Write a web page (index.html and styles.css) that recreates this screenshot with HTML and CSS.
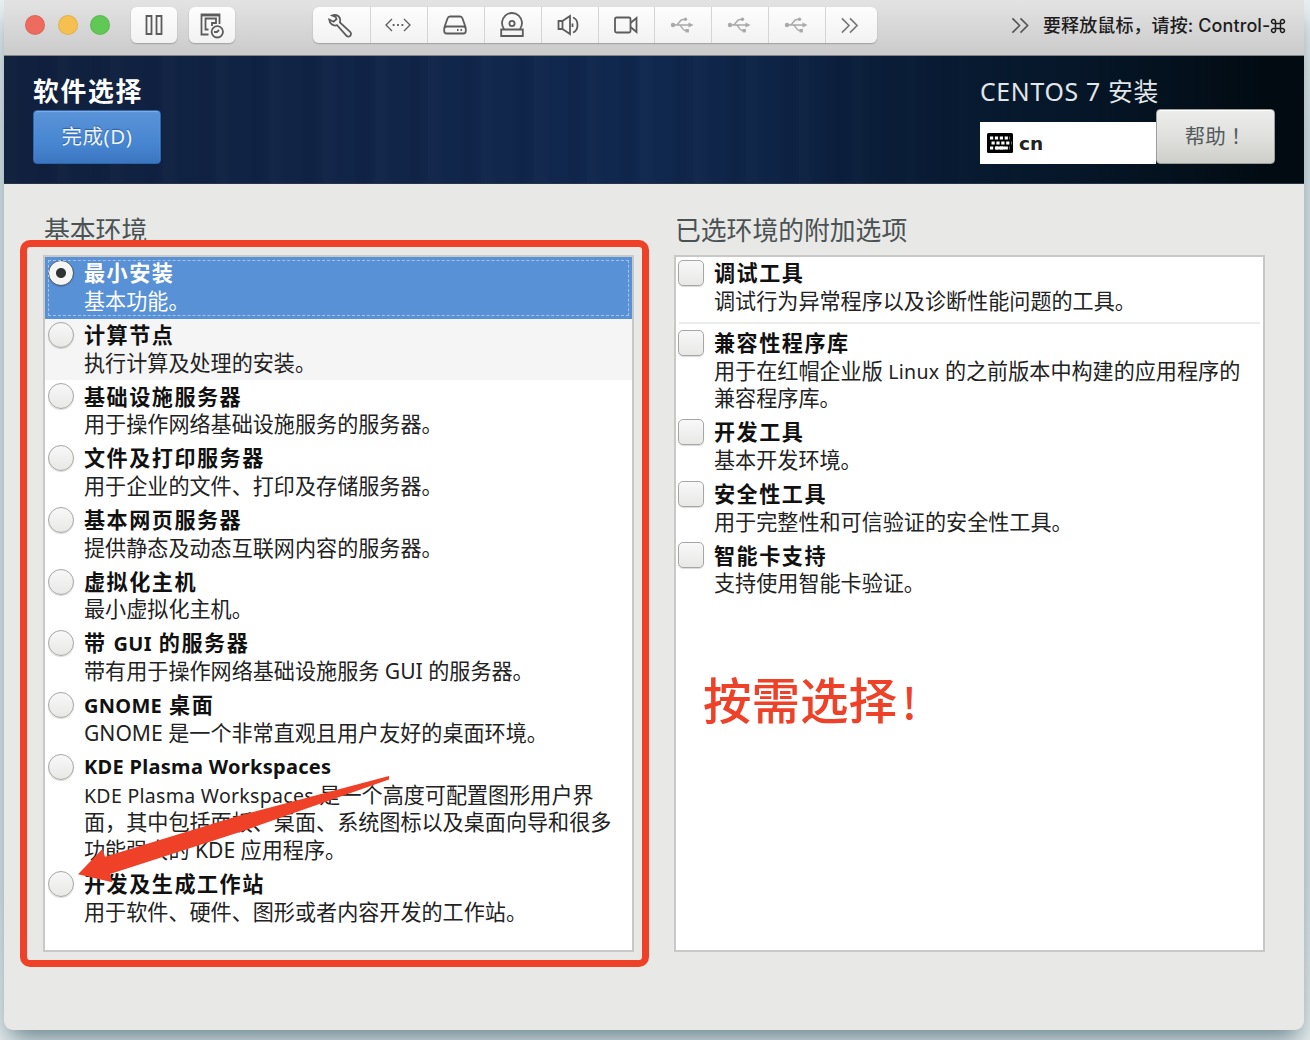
FILE: index.html
```
<!DOCTYPE html>
<html lang="zh-CN">
<head>
    <meta charset="UTF-8">
    <meta name="viewport" content="width=device-width, initial-scale=1.0">
    <title>软件选择</title>
    <link rel="stylesheet" href="styles.css">
</head>
<body>
<svg width="0" height="0" class="defs">
    <symbol id="usb" viewBox="0 0 24 20">
        <path d="M2 10h18M6 10c3 0 3-5.500 7-5.500h2M9 10c3 0 3 5.500 6 5.500h2" fill="none" stroke="currentColor" stroke-width="1.500"/>
        <circle cx="3" cy="10" r="2.200" fill="currentColor"/>
        <circle cx="15.500" cy="4.300" r="1.700" fill="currentColor"/>
        <rect x="15.500" y="14" width="3.400" height="3.400" fill="currentColor"/>
        <path d="M18.500 7.500l5 2.500-5 2.500z" fill="currentColor"/>
    </symbol>
    <symbol id="chevrons" viewBox="0 0 20 20">
        <path d="M2 2.500l7.500 7.500-7.500 7.500M10.500 2.500l7.500 7.500-7.500 7.500" fill="none" stroke="currentColor" stroke-width="1.700"/>
    </symbol>
</svg>

<div class="window">
    <div class="titlebar">
        <div class="lights">
            <span class="light red"></span>
            <span class="light yellow"></span>
            <span class="light green"></span>
        </div>
        <div class="tool-button pause">
            <svg width="20" height="22" viewBox="0 0 20 22"><path d="M2.500 2h5v18h-5zM12.500 2h5v18h-5z"/></svg>
        </div>
        <div class="tool-button">
            <svg width="26" height="28" viewBox="0 0 26 28">
                <path d="M9.500 23.500H2.500V3.500h18v9.500M9.500 18.500H6.500V7.500h10.500v4.500H13v3"/>
                <path d="M3 4.500h17"/>
                <circle cx="18.300" cy="20.800" r="5.700"/>
                <path d="M15 21h3l2-2"/>
            </svg>
        </div>
        <div class="tool-group">
            <div class="tool"><svg width="28" height="28" viewBox="0 0 28 28"><path d="M6 4.500c3-1.500 6.500-.2 7.800 2.500.7 1.600.6 3 .1 4.500l10 9.200c1.400 1.300 1.400 3 .3 4.100-1.200 1.200-3 1-4.100-.4l-9-10.200c-3.600 1.200-7.500-1-7.900-5.700l4.300 2.200 3-2.500-.8-2.200z"/></svg></div>
            <div class="tool"><svg width="28" height="20" viewBox="0 0 28 20"><path d="M8 4l-6 6 6 6M20 4l6 6-6 6" stroke-width="1.300"/><path d="M8.700 10h1.800M13.100 10h1.800M17.500 10h1.800"/></svg></div>
            <div class="tool"><svg width="26" height="22" viewBox="0 0 26 22"><path d="M2.500 13L5.500 4.500C6 3 6.800 2.500 8 2.500h10c1.300 0 2 .5 2.500 2l3 8.500"/><rect x="2.200" y="12.500" width="21.600" height="7" rx="2.500"/><path d="M15 16h1.500M18.500 16h1.500"/></svg></div>
            <div class="tool"><svg width="26" height="26" viewBox="0 0 26 26"><path d="M5 17a10 10 0 1 1 16 0"/><circle cx="13" cy="11.500" r="2.600"/><path d="M2.200 17.500h21.600v6.500H2.200z"/></svg></div>
            <div class="tool"><svg width="26" height="22" viewBox="0 0 26 22"><path d="M2.500 7h4v8h-4zM6.500 7L14 2v18L6.500 15z"/><path d="M17 3.500c6 2 6 13 0 15M16.500 9.500v3.500"/></svg></div>
            <div class="tool"><svg width="26" height="20" viewBox="0 0 26 20"><rect x="2" y="2.500" width="15.500" height="15" rx="1.500"/><path d="M17.500 8l6-5v14l-6-5"/></svg></div>
            <div class="tool dim"><svg width="24" height="20"><use href="#usb"/></svg></div>
            <div class="tool dim"><svg width="24" height="20"><use href="#usb"/></svg></div>
            <div class="tool dim"><svg width="24" height="20"><use href="#usb"/></svg></div>
            <div class="tool last"><svg width="19" height="19"><use href="#chevrons"/></svg></div>
        </div>
        <div class="hint">
            <svg width="20" height="19"><use href="#chevrons"/></svg>
            <span class="hint-text">要释放鼠标，请按: Control-<svg class="cmd" viewBox="0 0 16 16"><path d="M5.500 5.500h5v5h-5zM5.500 5.500H3.700a2 2 0 1 1 1.800-2zM10.500 5.500V3.500a2 2 0 1 1 1.800 2zM10.500 10.500h1.800a2 2 0 1 1-1.800 2zM5.500 10.500v2a2 2 0 1 1-1.800-2z"/></svg></span>
        </div>
    </div>

    <div class="header">
        <div class="header-left">
            <h1>软件选择</h1>
            <button class="done">完成(D)</button>
        </div>
        <div class="header-right">
            <div class="product">CENTOS 7 安装</div>
            <div class="header-row">
                <div class="keyboard">
                    <svg width="26" height="20" viewBox="0 0 26 20">
                        <rect width="26" height="20" rx="1.500" fill="#000"/>
                        <path d="M3 5h20M4.500 10h20M3 15h20" fill="none" stroke="#fff" stroke-width="3" stroke-dasharray="3.200 1.700"/>
                        <path d="M9 15h9" stroke="#fff" stroke-width="3"/>
                    </svg>
                    <span>cn</span>
                </div>
                <button class="help">帮助<span class="bang" lang="zh-TW">！</span></button>
            </div>
        </div>
    </div>

    <div class="content">
        <div class="column">
            <h2>基本环境</h2>
            <div class="list">
                <div class="item selected">
                    <span class="radio checked"></span>
                    <div><b>最小安装</b><p>基本功能。</p></div>
                </div>
                <div class="item shaded">
                    <span class="radio"></span>
                    <div><b>计算节点</b><p>执行计算及处理的安装。</p></div>
                </div>
                <div class="item">
                    <span class="radio"></span>
                    <div><b>基础设施服务器</b><p>用于操作网络基础设施服务的服务器。</p></div>
                </div>
                <div class="item">
                    <span class="radio"></span>
                    <div><b>文件及打印服务器</b><p>用于企业的文件、打印及存储服务器。</p></div>
                </div>
                <div class="item">
                    <span class="radio"></span>
                    <div><b>基本网页服务器</b><p>提供静态及动态互联网内容的服务器。</p></div>
                </div>
                <div class="item">
                    <span class="radio"></span>
                    <div><b>虚拟化主机</b><p>最小虚拟化主机。</p></div>
                </div>
                <div class="item">
                    <span class="radio"></span>
                    <div><b>带 <span class="latin">GUI</span> 的服务器</b><p>带有用于操作网络基础设施服务 GUI 的服务器。</p></div>
                </div>
                <div class="item">
                    <span class="radio"></span>
                    <div><b><span class="latin">GNOME</span> 桌面</b><p>GNOME 是一个非常直观且用户友好的桌面环境。</p></div>
                </div>
                <div class="item">
                    <span class="radio"></span>
                    <div><b class="latin">KDE Plasma Workspaces</b><p><span class="narrow">KDE Plasma Workspaces</span> 是一个高度可配置图形用户界<br>面，其中包括面板、桌面、系统图标以及桌面向导和很多<br>功能强大的 KDE 应用程序。</p></div>
                </div>
                <div class="item">
                    <span class="radio"></span>
                    <div><b>开发及生成工作站</b><p>用于软件、硬件、图形或者内容开发的工作站。</p></div>
                </div>
            </div>
        </div>

        <div class="column">
            <h2>已选环境的附加选项</h2>
            <div class="list addons">
                <div class="item">
                    <span class="checkbox"></span>
                    <div><b>调试工具</b><p>调试行为异常程序以及诊断性能问题的工具。</p></div>
                </div>
                <hr>
                <div class="item">
                    <span class="checkbox"></span>
                    <div><b>兼容性程序库</b><p>用于在红帽企业版 <span class="narrow">Linux</span> 的之前版本中构建的应用程序的<br>兼容程序库。</p></div>
                </div>
                <div class="item">
                    <span class="checkbox"></span>
                    <div><b>开发工具</b><p>基本开发环境。</p></div>
                </div>
                <div class="item">
                    <span class="checkbox"></span>
                    <div><b>安全性工具</b><p>用于完整性和可信验证的安全性工具。</p></div>
                </div>
                <div class="item">
                    <span class="checkbox"></span>
                    <div><b>智能卡支持</b><p>支持使用智能卡验证。</p></div>
                </div>
            </div>
        </div>
    </div>
</div>

<!-- Annotations drawn over the window -->
<div class="mark-box"></div>
<svg class="mark-arrow" width="312" height="108" viewBox="0 0 312 108">
    <path d="M0 98.300L24.300 73l2.700 7.700L160 40 311 0v3.500L165 55 32 98l2.300 8.300z"/>
</svg>
<div class="mark-text">按需选择<span>!</span></div>
</body>
</html>
```

FILE: styles.css
```
* {
    box-sizing: border-box;
}

body {
    margin: 0;
    height: 1040px;
    overflow: hidden;
    position: relative;
    font-family: "Noto Sans", "Noto Sans CJK SC", sans-serif;
    background: linear-gradient(#e9eff1, #d6e0e4 12%, #d6e0e4 85%, #e4eaec);
}

.defs {
    position: absolute;
}

.window {
    width: 1300px;
    height: 1030px;
    margin-left: 4px;
    background: #e8e8e6;
    border-radius: 0 0 9px 9px;
    box-shadow: 0 14px 24px -6px #66828b;
    overflow: hidden;
}

/* Title bar */
.titlebar {
    height: 56px;
    padding-left: 21px;
    display: flex;
    align-items: flex-start;
    background: linear-gradient(#e3e3e3, #cbcbcb);
    border-bottom: 1.5px solid #858585;
}

.lights {
    display: flex;
    gap: 12.5px;
    margin-top: 15px;
}

.light {
    width: 20px;
    height: 20px;
    border-radius: 50%;
    border: 1px solid rgba(0, 0, 0, 0.08);
}

.red { background: #ee6b60; }
.yellow { background: #f5c04f; }
.green { background: #61c755; }

.tool-button,
.tool-group {
    height: 36px;
    margin-top: 7px;
    background: linear-gradient(#fdfdfd, #f2f2f2);
    border-radius: 6px;
    box-shadow: 0 1px 1.5px rgba(0, 0, 0, 0.25);
    color: #5c5c5c;
}

.tool-button {
    width: 46px;
    margin-left: 12px;
    display: flex;
    align-items: center;
    justify-content: center;
}

.pause {
    margin-left: 20.5px;
}

.pause + .tool-button {
    margin-left: 12.5px;
}

.titlebar svg {
    fill: none;
    stroke: currentColor;
    stroke-width: 1.8;
}

.titlebar use {
    stroke: none;
}

.tool-group {
    display: flex;
    width: 564px;
    margin-left: 78px;
}

.tool {
    width: 56.9px;
    padding-right: 2px;
    display: flex;
    align-items: center;
    justify-content: center;
    border-right: 1px solid #d5d5d5;
}

.tool:first-child {
    width: 58px;
    padding-right: 3px;
}

.tool.dim {
    color: #a9a9a9;
}

.tool.last {
    flex: 1;
    border-right: 0;
    padding-right: 4px;
    color: #777;
}

.hint {
    display: flex;
    align-items: center;
    gap: 13px;
    height: 36px;
    margin-top: 7px;
    margin-left: 133px;
    color: #555;
}

.hint-text {
    margin-top: -2px;
    font: 500 18px Inter, "Noto Sans CJK SC", sans-serif;
    letter-spacing: 0.1px;
    color: #1d1d1d;
    white-space: nowrap;
}

.cmd {
    width: 16px;
    height: 16px;
    vertical-align: -2px;
}

.titlebar .cmd {
    stroke-width: 1.5;
}

/* Blue installer banner */
.header {
    height: 128px;
    padding: 0 29px;
    display: flex;
    justify-content: space-between;
    background:
        linear-gradient(90deg, transparent 60%, #06172a 82%, #020b12 97%),
        repeating-linear-gradient(90deg, rgba(255, 255, 255, 0.012) 0 9px, transparent 17px 31px, rgba(0, 10, 40, 0.08) 38px 43px, transparent 53px),
        linear-gradient(90deg, #10203d, #11264b 35%, #10284e 50%, #0d2141 65%, #071c31);
    border-bottom: 1px solid #273443;
}

h1 {
    margin: 18px 0 0;
    font-size: 25.8px;
    line-height: 34px;
    letter-spacing: 1.7px;
    color: #fff;
}

button {
    display: block;
    height: 55px;
    padding: 0 0 4px;
    font: 20.5px "Noto Sans", "Noto Sans CJK SC", sans-serif;
    border-radius: 4px;
}

.done {
    width: 128px;
    height: 54px;
    margin-top: 2px;
    padding-bottom: 5px;
    color: #eef4fb;
    letter-spacing: 0.5px;
    text-shadow: 0 -1px 1px #2a5d9f;
    background: linear-gradient(#5a93d8, #4785d1 65%, #3b75c0);
    border: 1px solid #2f66ab;
    box-shadow: inset 0 1px 1px #85afe2;
}

.header-right {
    width: 295px;
}

.product {
    margin-top: 18px;
    margin-bottom: 1px;
    font-size: 24.8px;
    line-height: 34px;
    letter-spacing: 0.7px;
    color: #e3e6e8;
    white-space: nowrap;
}

.header-row {
    display: flex;
    align-items: flex-end;
}

.keyboard {
    width: 176px;
    height: 42px;
    padding-left: 7px;
    display: flex;
    align-items: center;
    gap: 6px;
    background: #fff;
    font: bold 18.5px "DejaVu Sans", sans-serif;
    color: #222;
}

.help {
    width: 119px;
    color: #555b5d;
    background: linear-gradient(#ededeb, #e0e0de 50%, #cececa);
    border: 1px solid #9c9c99;
    box-shadow: inset 0 1px 1px #fff;
}

.bang {
    font-family: "Noto Sans CJK TC", sans-serif;
}

/* Two columns of choices */
.content {
    display: flex;
    gap: 40px;
    padding: 28px 39px 0;
}

h2 {
    margin: 0;
    font-size: 25.8px;
    line-height: 36px;
    font-weight: 400;
    color: #4b5254;
    padding-left: 1px;
}

.list {
    width: 591px;
    height: 697px;
    margin-top: 7px;
    background: #fff;
    border: 2px solid #c8c8c6;
}

.item {
    display: flex;
    gap: 10px;
    padding: 3.1px 0 3.1px 3px;
    font-size: 21.1px;
    line-height: 27.75px;
    color: #222;
    white-space: nowrap;
}

.addons .item {
    padding-left: 2px;
}

.item > div {
    margin: -0.8px 0 0.8px;
}

.item b {
    display: block;
    height: 27.75px;
    letter-spacing: 1.5px;
    color: #111;
}

.item p {
    margin: 0;
}

.item .latin {
    font-size: 20px;
    letter-spacing: 0.3px;
}

.narrow {
    font-size: 19.5px;
    line-height: 1;
    letter-spacing: 0.3px;
}

.selected {
    background: #5891d5;
    color: #fff;
    outline: 1px dashed #a4c3e9;
    outline-offset: -4px;
}

.item.selected b {
    color: #fff;
}

.shaded {
    background: #f5f5f5;
}

.radio,
.checkbox {
    flex: none;
    width: 26px;
    height: 26px;
    background: linear-gradient(#f8f8f8, #e8e8e7);
    border: 1.5px solid #a6a6a2;
    box-shadow: 0 1px 1px rgba(0, 0, 0, 0.15);
}

.radio {
    border-radius: 50%;
}

.radio.checked {
    background: radial-gradient(circle, #2e3436 4.5px, #f5f5f4 5.5px);
    border-color: #4a5a6e;
}

.checkbox {
    border-radius: 5px;
}

hr {
    height: 2px;
    margin: 3px 3px 2.9px;
    border: 0;
    background: #ececec;
}

/* Annotations */
.mark-box {
    position: absolute;
    left: 20px;
    top: 240px;
    width: 629px;
    height: 727px;
    border: 7px solid #ee4128;
    border-radius: 10px;
}

.mark-arrow {
    position: absolute;
    left: 78px;
    top: 776px;
    fill: #ee4128;
}

.mark-text {
    position: absolute;
    left: 703px;
    top: 663px;
    font: 500 48.5px/70px "Noto Sans CJK SC", sans-serif;
    color: #ee4128;
}

.mark-text span {
    margin-left: 5px;
    font-size: 43px;
}
```
